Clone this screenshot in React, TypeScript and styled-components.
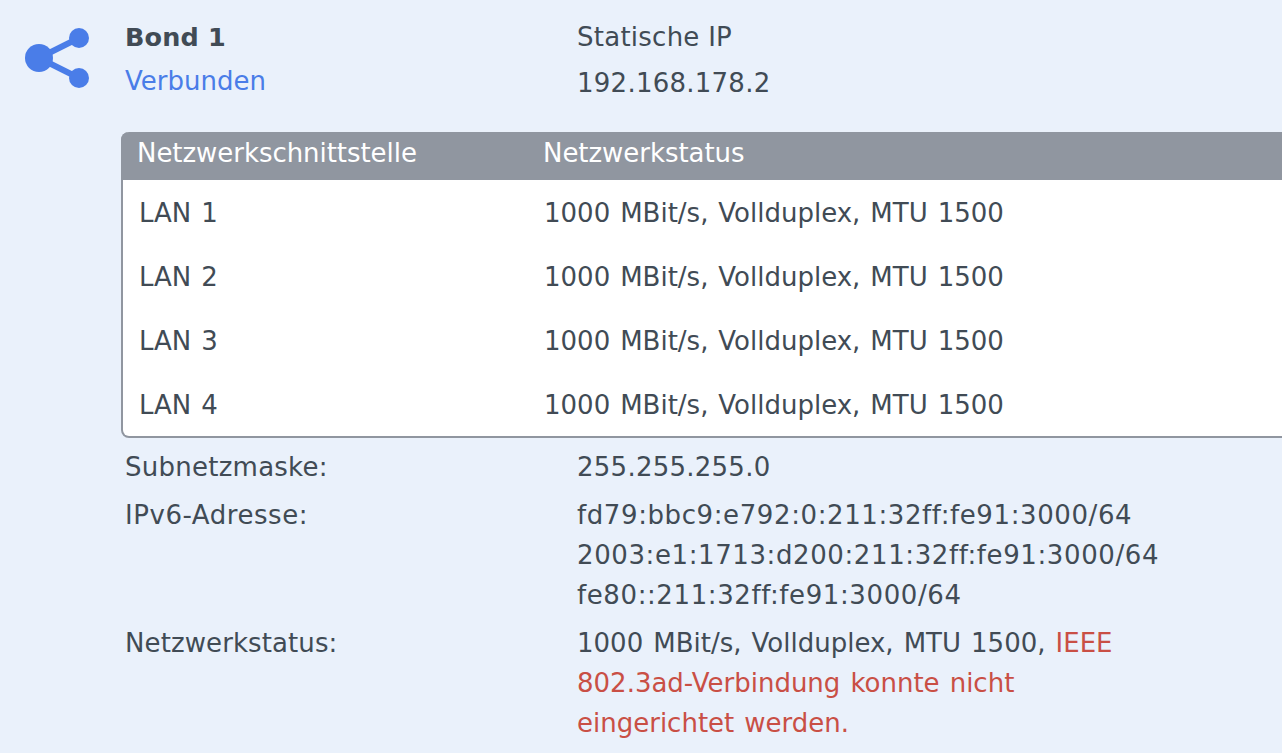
import React from "react";
import styled, { createGlobalStyle } from "styled-components";

const GlobalStyle = createGlobalStyle`
  html, body {
    margin: 0;
    padding: 0;
    height: 100%;
    overflow: hidden;
    background: #eaf1fb;
  }
  body {
    font-family: "DejaVu Sans", Verdana, sans-serif;
    font-size: 26px;
    color: #414b55;
  }
`;

const Page = styled.div`
  display: flex;
  width: 1282px;
  height: 753px;
  overflow: hidden;
`;

const IconColumn = styled.div`
  flex: 0 0 121px;
  padding: 28px 0 0 25px;
  box-sizing: border-box;
  svg {
    display: block;
  }
`;

const Content = styled.div`
  flex: 1;
  min-width: 0;
  padding-top: 15px;
`;

const Head = styled.div`
  display: grid;
  grid-template-columns: 451px 1fr;
  padding-left: 5px;
  line-height: 44px;
  height: 117px;
`;

const Name = styled.div`
  font-weight: 700;
  font-size: 25.5px;
  margin-left: -1px;
  letter-spacing: 0.15px;
`;

const Connected = styled.div`
  color: #4a7de8;
  margin-left: -1px;
`;

const Spaced = styled.div<{ $tracking?: number }>`
  letter-spacing: ${(props) => props.$tracking ?? 0}px;
`;

const AddressValue = styled(Spaced)`
  margin-top: 2px;
`;

const Table = styled.div`
  width: 1300px;
  border: 2px solid #9096a0;
  border-top: 0;
  border-radius: 8px;
  background: #fff;
  box-sizing: border-box;
  height: 306px;
`;

const TableHead = styled.div`
  display: grid;
  grid-template-columns: 406px 1fr;
  height: 48px;
  padding-left: 16px;
  background: #9096a0;
  color: #fff;
  line-height: 42px;
  border-radius: 8px 8px 0 0;
  margin: 0 -2px;
  letter-spacing: -0.05px;
`;

const TableRow = styled.div`
  display: grid;
  grid-template-columns: 405px 1fr;
  height: 64px;
  padding-left: 16px;
  line-height: 66px;
  word-spacing: 1.7px;
`;

const Details = styled.div`
  padding: 9px 0 0 4px;
`;

const Detail = styled.div`
  display: grid;
  grid-template-columns: 452px 560px;
  line-height: 40px;
  margin-bottom: 8px;
`;

const Status = styled.div`
  word-spacing: 1.8px;
`;

const Warning = styled.span`
  color: #c94f45;
`;

const ports = ["LAN 1", "LAN 2", "LAN 3", "LAN 4"];
const speed = "1000 MBit/s, Vollduplex, MTU 1500";

const App = () => (
  <>
    <GlobalStyle />
    <Page>
      <IconColumn>
        <svg width="64" height="60" viewBox="0 0 64 60" fill="#4a7de8">
          <path d="M14 30 L54 10 M14 30 L54 50" stroke="#4a7de8" strokeWidth="6" />
          <circle cx="14" cy="30" r="14" />
          <circle cx="54" cy="10" r="10" />
          <circle cx="54" cy="50" r="10" />
        </svg>
      </IconColumn>
      <Content>
        <Head>
          <div>
            <Name>Bond 1</Name>
            <Connected>Verbunden</Connected>
          </div>
          <div>
            <Spaced $tracking={0.25}>Statische IP</Spaced>
            <AddressValue $tracking={0.25}>192.168.178.2</AddressValue>
          </div>
        </Head>
        <Table>
          <TableHead>
            <div>Netzwerkschnittstelle</div>
            <div>Netzwerkstatus</div>
          </TableHead>
          {ports.map((port) => (
            <TableRow key={port}>
              <div>{port}</div>
              <div>{speed}</div>
            </TableRow>
          ))}
        </Table>
        <Details>
          <Detail>
            <Spaced $tracking={0.25}>Subnetzmaske:</Spaced>
            <Spaced $tracking={0.25}>255.255.255.0</Spaced>
          </Detail>
          <Detail>
            <Spaced $tracking={0.55}>IPv6-Adresse:</Spaced>
            <Spaced $tracking={0.6}>
              fd79:bbc9:e792:0:211:32ff:fe91:3000/64
              <br />
              2003:e1:1713:d200:211:32ff:fe91:3000/64
              <br />
              fe80::211:32ff:fe91:3000/64
            </Spaced>
          </Detail>
          <Detail>
            <Spaced $tracking={0.1}>Netzwerkstatus:</Spaced>
            <Status>
              {speed}, <Warning>IEEE 802.3ad-Verbindung konnte nicht eingerichtet werden.</Warning>
            </Status>
          </Detail>
        </Details>
      </Content>
    </Page>
  </>
);

export default App;
